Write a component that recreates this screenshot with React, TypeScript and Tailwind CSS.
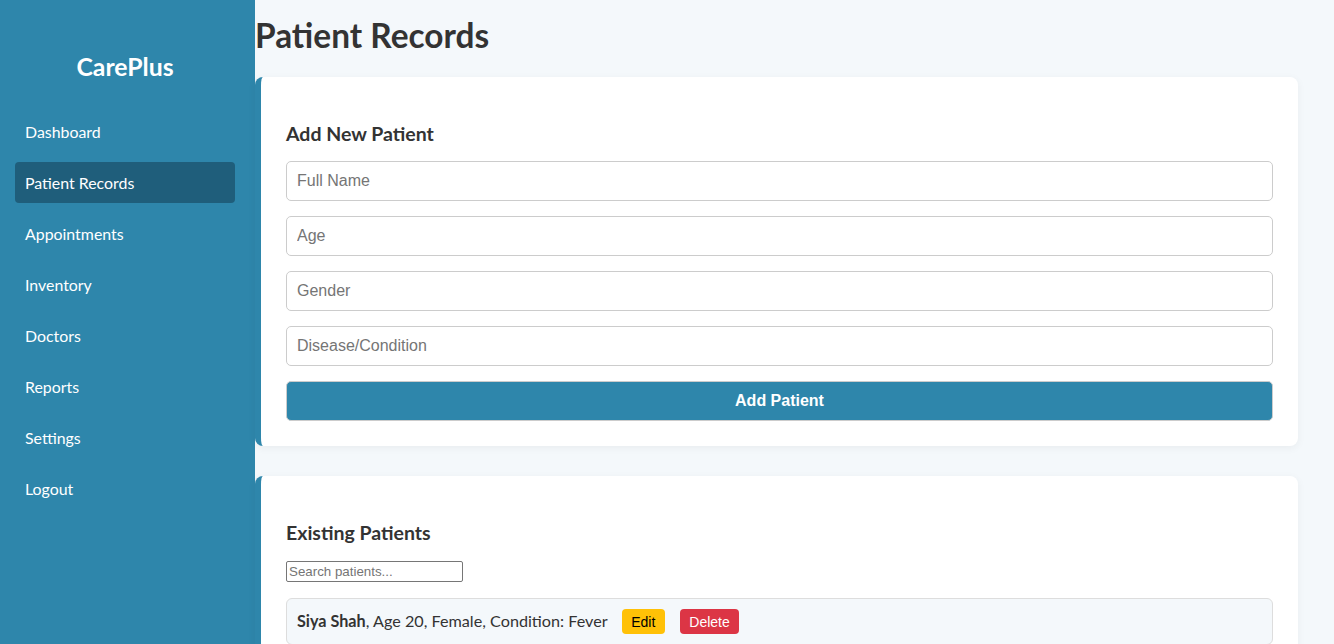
import React from "react";

const nav = ["Dashboard", "Patient Records", "Appointments", "Inventory", "Doctors", "Reports", "Settings", "Logout"];

export default function App() {
  const ui = { fontFamily: "Lato, 'Open Sans', sans-serif" };
  const arial = { fontFamily: "'Liberation Sans', Arial, sans-serif" };
  return (
    <div className="flex min-h-[644px] w-full bg-[#f4f8fb]" style={ui}>
      <aside className="w-[255px] shrink-0 bg-[#2e86ab] px-[15px] text-white">
        <h2 className="mt-[52px] mb-[29px] text-center text-[24.8px] font-bold leading-[30px] pr-[5px]">CarePlus</h2>
        <ul className="flex flex-col gap-[10px]">
          {nav.map((n) => (
            <li
              key={n}
              className={`rounded-[4px] px-[10px] h-[41px] flex items-center text-[15.9px] ${
                n === "Patient Records" ? "bg-[#1f5e7b] w-[220px]" : ""
              }`}
            >
              {n}
            </li>
          ))}
        </ul>
      </aside>
      <main className="flex-1 pr-[36px] text-[#333]">
        <h1 className="mt-[16px] mb-[22px] text-[33.4px] font-bold leading-[39px]">Patient Records</h1>
        <section className="rounded-[8px] border-l-[6px] border-[#2e86ab] bg-white px-[25px] pb-[25px] pt-[45px] shadow-[0_2px_8px_rgba(0,0,0,0.05)]">
          <h3 className="mb-[15px] text-[19.5px] font-bold leading-[24px]">Add New Patient</h3>
          <div className="flex flex-col gap-[15px]">
            {["Full Name", "Age", "Gender", "Disease/Condition"].map((p) => (
              <input
                key={p}
                placeholder={p}
                className="h-[40px] w-full rounded-[5px] border border-[#ccc] px-[10px] text-[16px] placeholder-[#757575] outline-none"
                style={arial}
              />
            ))}
            <button
              className="h-[40px] w-full rounded-[5px] border border-[#ccc] bg-[#2e86ab] text-[16px] font-bold text-white"
              style={arial}
            >
              Add Patient
            </button>
          </div>
        </section>
        <section className="mt-[30px] rounded-[8px] border-l-[6px] border-[#2e86ab] bg-white px-[25px] pb-[25px] pt-[45px] shadow-[0_2px_8px_rgba(0,0,0,0.05)]">
          <h3 className="mb-[16px] text-[19.5px] font-bold leading-[24px]">Existing Patients</h3>
          <input
            placeholder="Search patients..."
            className="block h-[21px] w-[177px] rounded-[2px] border border-[#767676] px-[2px] text-[13.33px] placeholder-[#757575] outline-none"
            style={arial}
          />
          <div className="mt-[16px] flex items-center rounded-[6px] border border-[#ddd] bg-[#f4f8fb] px-[10px] py-[10px] text-[16.2px]">
            <span>
              <b>Siya Shah</b>, Age 20, Female, Condition: Fever
            </span>
            <button className="ml-[14px] h-[25px] rounded-[4px] bg-[#ffc107] px-[9.5px] text-[14px] leading-[16px] text-black" style={arial}>
              Edit
            </button>
            <button className="ml-[15px] h-[25px] rounded-[4px] bg-[#dc3545] px-[9.5px] text-[14px] leading-[16px] text-white" style={arial}>
              Delete
            </button>
          </div>
          <div className="h-[40px]" />
        </section>
      </main>
    </div>
  );
}
